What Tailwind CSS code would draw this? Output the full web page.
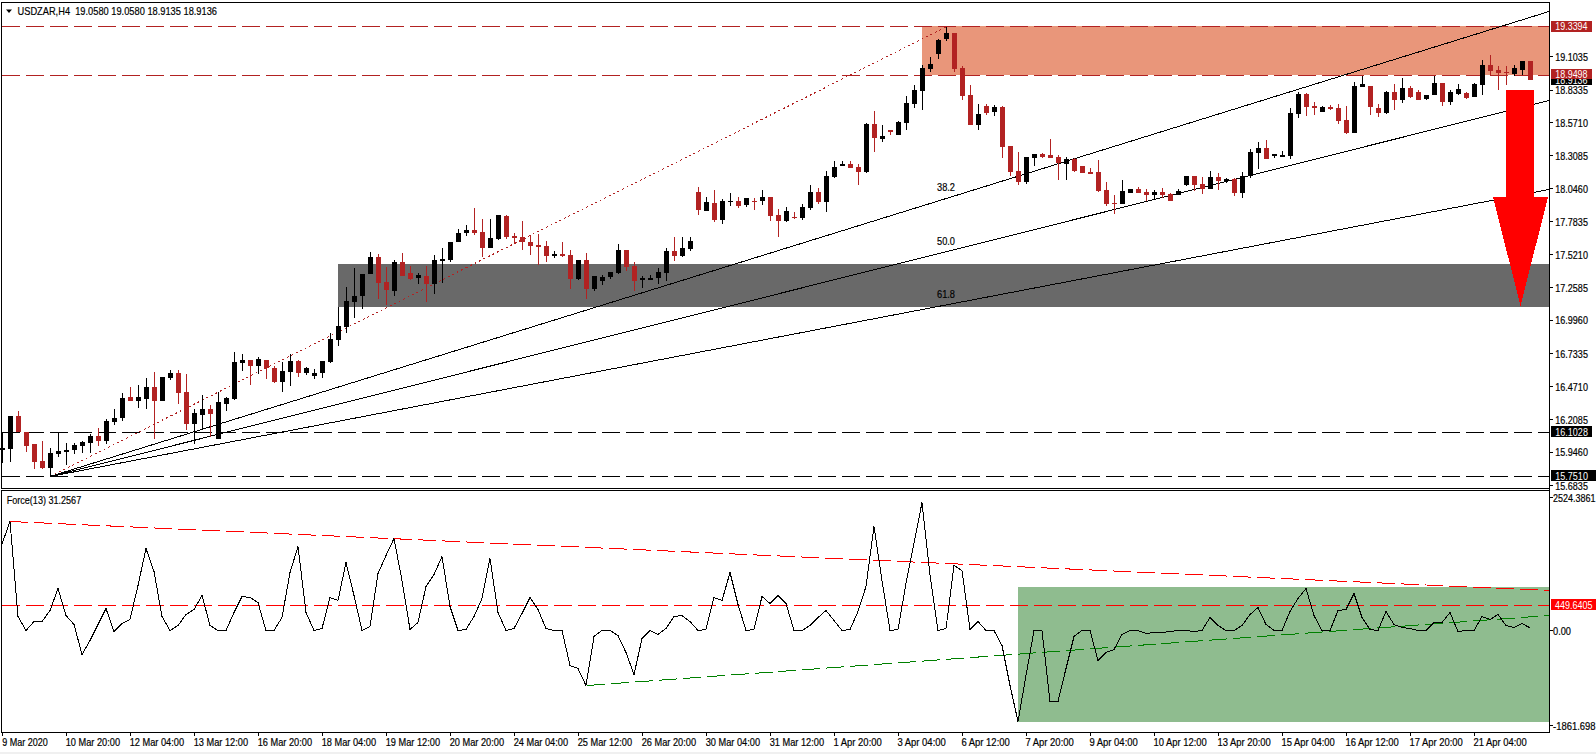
<!DOCTYPE html>
<html>
<head>
<meta charset="utf-8">
<title>USDZAR,H4</title>
<script src="https://cdn.jsdelivr.net/npm/@tailwindcss/browser@4"></script>
</head>
<body class="bg-white">
<div class="flex flex-col w-[1596px] h-[754px] overflow-hidden bg-white">
  <svg class="block w-[1596px] h-[752px] shrink-0 font-['Liberation_Sans',Arial,sans-serif] text-[11px] fill-black" width="1596" height="752" viewBox="0 0 1596 752">
    <!-- zones -->
    <g shape-rendering="crispEdges">
      <rect x="922" y="26" width="627" height="49" fill="#e9967a"/>
      <rect x="338" y="264" width="1211" height="43" fill="#696969"/>
      <rect x="1018" y="587" width="531" height="135" fill="#8fbc8f"/>
    </g>
    <!-- levels and trend objects -->
    <g fill="none" stroke-width="1" shape-rendering="crispEdges">
      <path d="M2 26.5H1549M2 75.5H1549" stroke="#b22222" stroke-dasharray="18 6"/>
      <path d="M2 432.5H1549M2 476.5H1549" stroke="#000" stroke-dasharray="18 6"/>
      <path d="M50 476.5L946 27" stroke="#b22222" stroke-dasharray="2 3"/>
      <path d="M50 476.5L1549 11.5M50 476.5L1549 100.5M50 476.5L1549 189.5" stroke="#000"/>
      <path d="M2 605.5H1549" stroke="#f00" stroke-dasharray="18 6"/>
      <path d="M10 521.5L1549 590.5" stroke="#f00" stroke-dasharray="18 6"/>
      <path d="M587 685.5L1549 615.5" stroke="#008000" stroke-dasharray="18 6"/>
      <path id="force" stroke="#000"/>
    </g>
    <!-- candles -->
    <g shape-rendering="crispEdges">
      <path id="up" fill="#000"/>
      <path id="down" fill="#b22222"/>
      <polygon points="1506,90 1534,90 1534,197 1548,197 1520.5,306 1493,197 1506,197" fill="#f00"/>
    </g>
    <!-- frames -->
    <path shape-rendering="crispEdges" fill="none" stroke="#000" d="M1.5 488.5V2.5H1549.5V732.5H1.5V490.5H1549.5M1.5 488.5H1549.5
      M1550 56.5h3M1550 90.5h3M1550 122.5h3M1550 155.5h3M1550 188.5h3M1550 221.5h3M1550 254.5h3M1550 287.5h3M1550 320.5h3M1550 353.5h3M1550 386.5h3M1550 419.5h3M1550 452.5h3M1550 485.5h3M1550 630.5h3M1550 497.5h3M1550 725.5h3
      M2.5 733v3M66.5 733v3M130.5 733v3M194.5 733v3M258.5 733v3M322.5 733v3M386.5 733v3M450.5 733v3M514.5 733v3M578.5 733v3M642.5 733v3M706.5 733v3M770.5 733v3M834.5 733v3M898.5 733v3M962.5 733v3M1026.5 733v3M1090.5 733v3M1154.5 733v3M1218.5 733v3M1282.5 733v3M1346.5 733v3M1410.5 733v3M1474.5 733v3"/>
    <!-- legends -->
    <polygon points="6,9.5 12,9.5 9,13" fill="#000"/>
    <g class="[stroke:#000] [stroke-width:0.2]">
    <text x="17.5" y="14.7" textLength="199.5" lengthAdjust="spacingAndGlyphs">USDZAR,H4&#160; 19.0580 19.0580 18.9135 18.9136</text>
    <text x="6.7" y="503.7" textLength="74.5" lengthAdjust="spacingAndGlyphs">Force(13) 31.2567</text>
    <text x="937" y="190.7" textLength="18" lengthAdjust="spacingAndGlyphs">38.2</text>
    <text x="937" y="244.7" textLength="18" lengthAdjust="spacingAndGlyphs">50.0</text>
    <text x="937" y="297.6" textLength="18" lengthAdjust="spacingAndGlyphs">61.8</text>
    </g>
    <!-- price axis -->
    <g class="[stroke:#000] [stroke-width:0.2]">
      <text x="1555.3" y="60.7" textLength="32.6" lengthAdjust="spacingAndGlyphs">19.1035</text>
      <text x="1555.3" y="94" textLength="32.6" lengthAdjust="spacingAndGlyphs">18.8335</text>
      <text x="1555.3" y="126.7" textLength="32.6" lengthAdjust="spacingAndGlyphs">18.5710</text>
      <text x="1555.3" y="159.7" textLength="32.6" lengthAdjust="spacingAndGlyphs">18.3085</text>
      <text x="1555.3" y="192.7" textLength="32.6" lengthAdjust="spacingAndGlyphs">18.0460</text>
      <text x="1555.3" y="225.7" textLength="32.6" lengthAdjust="spacingAndGlyphs">17.7835</text>
      <text x="1555.3" y="258.7" textLength="32.6" lengthAdjust="spacingAndGlyphs">17.5210</text>
      <text x="1555.3" y="291.7" textLength="32.6" lengthAdjust="spacingAndGlyphs">17.2585</text>
      <text x="1555.3" y="324.4" textLength="32.6" lengthAdjust="spacingAndGlyphs">16.9960</text>
      <text x="1555.3" y="357.7" textLength="32.6" lengthAdjust="spacingAndGlyphs">16.7335</text>
      <text x="1555.3" y="390.7" textLength="32.6" lengthAdjust="spacingAndGlyphs">16.4710</text>
      <text x="1555.3" y="423.7" textLength="32.6" lengthAdjust="spacingAndGlyphs">16.2085</text>
      <text x="1555.3" y="456.4" textLength="32.6" lengthAdjust="spacingAndGlyphs">15.9460</text>
      <text x="1555.3" y="489.7" textLength="32.6" lengthAdjust="spacingAndGlyphs">15.6835</text>
    </g>
    <g>
      <rect x="1551" y="21" width="41" height="10.5" fill="#b22222" shape-rendering="crispEdges"/>
      <text x="1555.3" y="30" textLength="32.2" lengthAdjust="spacingAndGlyphs" fill="#fff">19.3394</text>

      <rect x="1551" y="74" width="41" height="11" fill="#000" shape-rendering="crispEdges"/>
      <text x="1555.3" y="83.6" textLength="32.2" lengthAdjust="spacingAndGlyphs" fill="#fff">18.9136</text>
      <rect x="1551" y="69" width="41" height="10" fill="#b22222" shape-rendering="crispEdges"/>
      <text x="1555.3" y="78.3" textLength="32.2" lengthAdjust="spacingAndGlyphs" fill="#fff">18.9498</text>

      <rect x="1551" y="426" width="41" height="11" fill="#000" shape-rendering="crispEdges"/>
      <text x="1555.3" y="435.7" textLength="32.6" lengthAdjust="spacingAndGlyphs" fill="#fff">16.1028</text>
      <rect x="1551" y="470" width="45" height="11" fill="#000" shape-rendering="crispEdges"/>
      <text x="1555.3" y="479.7" textLength="32.6" lengthAdjust="spacingAndGlyphs" fill="#fff">15.7510</text>
    </g>
    <!-- force axis -->
    <g class="[stroke:#000] [stroke-width:0.2]">
      <text x="1553" y="501.7" textLength="42.5" lengthAdjust="spacingAndGlyphs">2524.3861</text>
      <text x="1553" y="634.7" textLength="18" lengthAdjust="spacingAndGlyphs">0.00</text>
      <text x="1553" y="729.7" textLength="42.5" lengthAdjust="spacingAndGlyphs">-1861.698</text>
    </g>
    <rect x="1551" y="599" width="44.5" height="11" fill="#f00" shape-rendering="crispEdges"/>
    <text x="1555" y="608.7" textLength="37.5" lengthAdjust="spacingAndGlyphs" fill="#fff">449.6405</text>
    <!-- time axis -->
    <g class="[stroke:#000] [stroke-width:0.2]">
      <text x="2.3" y="745.7" textLength="45.5" lengthAdjust="spacingAndGlyphs">9 Mar 2020</text>
      <text x="65.7" y="745.7" textLength="54.4" lengthAdjust="spacingAndGlyphs">10 Mar 20:00</text>
      <text x="129.7" y="745.7" textLength="54.4" lengthAdjust="spacingAndGlyphs">12 Mar 04:00</text>
      <text x="193.7" y="745.7" textLength="54.4" lengthAdjust="spacingAndGlyphs">13 Mar 12:00</text>
      <text x="257.7" y="745.7" textLength="54.4" lengthAdjust="spacingAndGlyphs">16 Mar 20:00</text>
      <text x="321.7" y="745.7" textLength="54.4" lengthAdjust="spacingAndGlyphs">18 Mar 04:00</text>
      <text x="385.7" y="745.7" textLength="54.4" lengthAdjust="spacingAndGlyphs">19 Mar 12:00</text>
      <text x="449.7" y="745.7" textLength="54.4" lengthAdjust="spacingAndGlyphs">20 Mar 20:00</text>
      <text x="513.7" y="745.7" textLength="54.4" lengthAdjust="spacingAndGlyphs">24 Mar 04:00</text>
      <text x="577.7" y="745.7" textLength="54.4" lengthAdjust="spacingAndGlyphs">25 Mar 12:00</text>
      <text x="641.7" y="745.7" textLength="54.4" lengthAdjust="spacingAndGlyphs">26 Mar 20:00</text>
      <text x="705.7" y="745.7" textLength="54.4" lengthAdjust="spacingAndGlyphs">30 Mar 04:00</text>
      <text x="769.7" y="745.7" textLength="54.4" lengthAdjust="spacingAndGlyphs">31 Mar 12:00</text>
      <text x="833.4" y="745.7" textLength="48.4" lengthAdjust="spacingAndGlyphs">1 Apr 20:00</text>
      <text x="897.4" y="745.7" textLength="48.4" lengthAdjust="spacingAndGlyphs">3 Apr 04:00</text>
      <text x="961.4" y="745.7" textLength="48.4" lengthAdjust="spacingAndGlyphs">6 Apr 12:00</text>
      <text x="1025.4" y="745.7" textLength="48.4" lengthAdjust="spacingAndGlyphs">7 Apr 20:00</text>
      <text x="1089.4" y="745.7" textLength="48.4" lengthAdjust="spacingAndGlyphs">9 Apr 04:00</text>
      <text x="1153.4" y="745.7" textLength="53.4" lengthAdjust="spacingAndGlyphs">10 Apr 12:00</text>
      <text x="1217.4" y="745.7" textLength="53.4" lengthAdjust="spacingAndGlyphs">13 Apr 20:00</text>
      <text x="1281.4" y="745.7" textLength="53.4" lengthAdjust="spacingAndGlyphs">15 Apr 04:00</text>
      <text x="1345.4" y="745.7" textLength="53.4" lengthAdjust="spacingAndGlyphs">16 Apr 12:00</text>
      <text x="1409.4" y="745.7" textLength="53.4" lengthAdjust="spacingAndGlyphs">17 Apr 20:00</text>
      <text x="1473.4" y="745.7" textLength="53.4" lengthAdjust="spacingAndGlyphs">21 Apr 04:00</text>
    </g>
  </svg>
  <div class="h-[2px] w-full bg-[#f0f0f0]"></div>
</div>
<script>
var A="b623,629,576,670 b528,626,528,665 r528,576,513,576 r576,617,576,635 r612,665,612,686 r663,683,603,686 b639,683,624,708 b633,641,577,650 b630,635,609,675 b615,630,609,641 b606,618,603,638 b588,608,582,638 r588,603,564,618 b543,603,537,612 b534,546,507,555 b474,534,459,543 r471,483,441,483 b471,483,435,504 b441,477,414,507 r441,483,396,597 b411,483,411,483 b399,414,390,420 r399,459,390,492 r456,552,402,570 b519,552,507,612 b507,525,465,570 r507,522,495,592 b486,597,456,597 b474,492,471,513 b366,477,336,480 b360,369,342,393 r360,378,360,435 b357,378,351,402 r360,384,360,417 r384,426,378,429 b393,426,366,456 b363,396,342,438 r363,399,360,411 b384,399,381,405 b399,408,387,417 b363,399,363,414 b297,366,279,369 b258,300,201,318 b183,261,141,279 b168,186,84,234 b102,168,102,207 b51,102,36,102 r51,129,42,177 r126,150,81,195 b66,153,60,168";
var B="r396,438,369,438 r429,447,408,450 b435,444,429,462 r438,462,408,516 b390,462,375,492 b387,393,354,459 b336,390,336,396 b309,336,297,336 b300,309,285,318 r300,309,234,315 r306,354,267,381 b324,354,267,354 b255,327,255,330 r258,321,255,327 r318,324,309,342 r321,336,273,360 r336,348,315,375 r345,351,312,405 r348,378,333,396 b372,378,363,384 r372,378,336,381 r375,447,360,477 b390,447,390,450 r390,477,369,507 b438,477,438,483 b441,453,435,465 b426,441,426,447 b360,429,342,432 r360,411,360,423 r408,453,396,483 b444,450,438,474 b444,450,435,450 b426,444,414,462 b363,429,354,453 r363,378,321,393 b354,378,321,381 b333,357,321,363 r186,240,171,255 b216,243,201,243 r219,270,180,276 b213,270,207,282 b213,216,189,228 r213,228,201,234 b204,225,204,231 r213,216,204,240 b201,213,180,225 r201,258,201,273 r255,273,237,321 b243,273,231,276 r261,264,246,267";
var C="b621,654,612,660 b576,624,555,630 r576,606,564,612 b528,606,513,636 b501,531,483,534 b492,498,483,498 r492,504,483,504 r501,516,492,555 b372,516,369,519 r372,414,333,456 b408,417,375,426 r390,396,390,405 b366,405,363,405 b309,369,288,390 b270,312,255,324 b204,273,195,330 b192,207,171,216 b120,162,117,177 b99,117,81,123 r99,207,99,216 r204,288,198,300 r285,375,255,375 b342,375,312,390 r318,339,312,345 b321,336,315,348 r321,441,318,474 r438,516,438,528 r513,546,456,555 b471,546,471,552 b462,474,462,498 r462,471,459,474 r465,474,417,474 r471,489,465,540 b477,492,471,540 r477,513,474,516 r498,519,498,519 r516,522,504,522 r516,573,480,576 r570,612,546,618 r609,612,585,642 b573,612,540,612 b567,579,567,579 r567,579,561,579 r576,585,567,603 b576,585,570,597 r576,585,564,594 r582,603,579,603 b573,585,567,585 b528,555,528,558 r528,555,528,573 r552,567,531,582 b531,567,513,567 r531,543,519,570 b537,543,534,549 r537,579,534,588 b528,579,516,594 b456,528,447,534 b444,459,426,507 r444,477,420,477 b462,468,462,474 b465,471,453,471 b339,468,324,477 b282,342,276,354 r282,321,279,348 r318,324,306,345 b321,336,318,336 r321,327,315,330 r324,363,312,372 r360,399,318,402 b258,399,246,399 b252,261,228,261 r258,321,258,345 r324,339,312,351 b276,339,273,342 r276,300,252,330 b264,300,234,309 r264,291,258,294 r276,300,270,300 b285,297,285,300 b249,285,228,285 r249,306,249,318 b276,306,270,315 b267,282,252,285 r279,294,276,297 b252,291,249,291 b195,255,180,285 r195,213,165,228 r210,219,198,270 r216,219,198,255 b204,222,195,228 b183,210,183,225 r183,240,183,240";
var up="",down="",i=0;
[[A,240],[B,130],[C,0]].forEach(function(s){
  s[0].split(" ").forEach(function(c){
    var v=c.slice(1).split(",").map(function(n){return Math.round(n/3)+s[1]});
    var x=2+8*i;i++;
    var d="M"+x+" "+v[2]+"h1V"+Math.max(v[3],v[2]+1)+"h-1zM"+(x-2)+" "+v[0]+"h5V"+Math.max(v[1],v[0]+1)+"h-5z";
    if(c[0]=="b")up+=d;else down+=d;
  });
});
document.getElementById("up").setAttribute("d",up);
document.getElementById("down").setAttribute("d",down);
var F=[190,123,408,450,423,423,390,324,405,432,522,480,432,384,453,429,417,315,204,273,408,450,435,402,387,345,435,450,450,396,348,351,366,450,450,411,276,198,396,450,444,351,360,246,345,450,438,279,225,174,
300,447,426,318,282,228,378,450,447,408,354,234,396,450,444,399,351,387,444,450,450,555,564,615,468,450,450,465,516,582,474,450,462,444,408,405,423,450,447,351,360,276,372,450,447,348,369,345,369,450,
450,435,411,390,420,450,447,393,318,138,300,450,447,309,189,66,282,450,444,255,270,447,423,450,450,495,615,723,585,450,450,663,663,564,468,450,450,540,516,507,462,450,450,459,456,456,453,450,450,453,
450,411,435,450,450,435,402,381,432,450,450,393,354,324,405,450,450,390,387,339,411,447,450,393,432,441,444,450,450,426,426,396,453,450,450,408,417,402,435,441,429,442];
document.getElementById("force").setAttribute("d","M"+F.map(function(z,k){return (2+8*k)+" "+(480+z/3+.5)}).join("L"));
</script>
</body>
</html>
